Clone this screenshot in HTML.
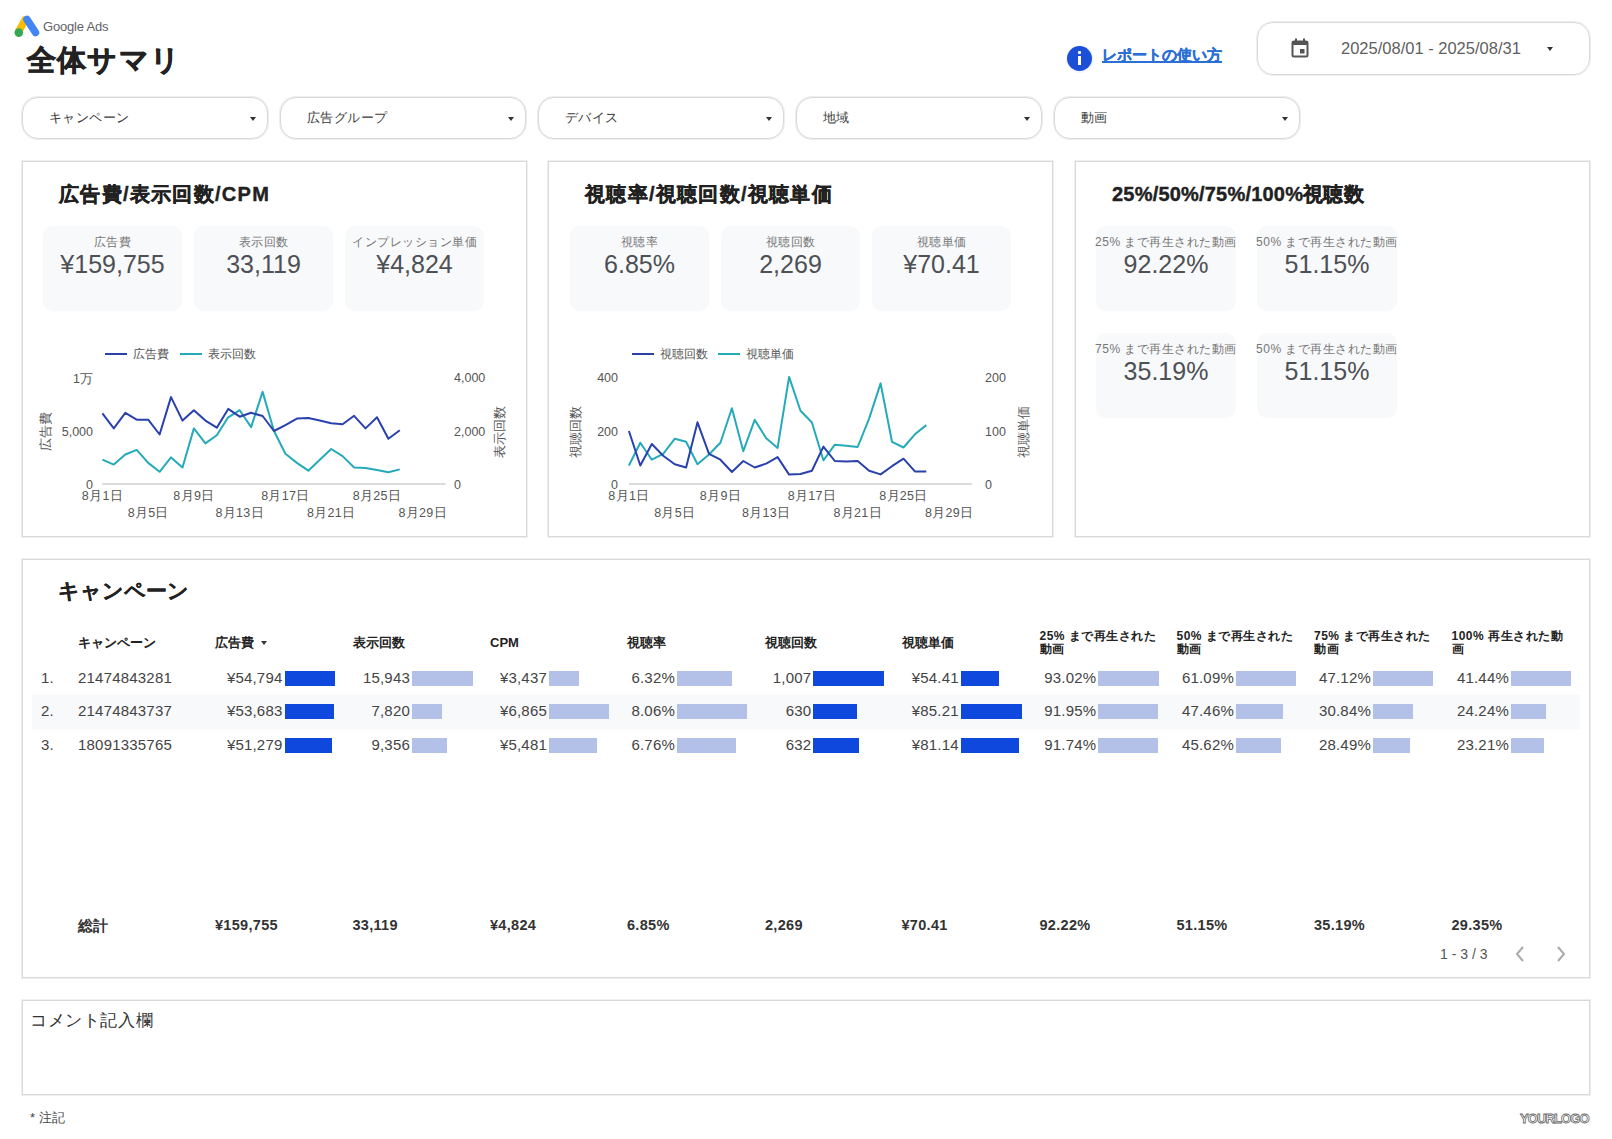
<!DOCTYPE html><html><head><meta charset="utf-8"><style>
*{box-sizing:border-box;margin:0;padding:0}
html,body{width:1612px;height:1139px;overflow:hidden;background:#fff}
body{position:relative;font-family:"Liberation Sans",sans-serif;color:#212121}
.ab{position:absolute;white-space:nowrap}
.card{position:absolute;border:1px solid #d9d9d9;box-shadow:0 0 0 1px #efefef;background:#fff}
.pill{position:absolute;border:1px solid #d9d9d9;box-shadow:0 0 0 1px #efefef;border-radius:16px;background:#fff}
.pill span{position:absolute;left:26px;top:11px;font-size:13px;letter-spacing:0.4px;color:#3c3c3c}
.caret{position:absolute;width:0;height:0;border-left:3.5px solid transparent;border-right:3.5px solid transparent;border-top:4px solid #333}
.mbox{position:absolute;background:#f8f9fb;border-radius:10px}
.mlab{position:absolute;left:-10px;right:-10px;text-align:center;font-size:12px;letter-spacing:0.5px;color:#777;top:8px;white-space:nowrap}
.mval{position:absolute;left:0;right:0;text-align:center;font-size:25px;color:#4d5054;top:23.5px;white-space:nowrap}
.ctitle{position:absolute;font-size:20px;letter-spacing:1.3px;font-weight:bold;color:#212121;-webkit-text-stroke:0.4px #212121;white-space:nowrap}
.ax{position:absolute;font-size:12.5px;color:#555;white-space:nowrap}
.th{position:absolute;font-size:13px;font-weight:bold;color:#222;white-space:nowrap;line-height:13px}
.td{position:absolute;font-size:15px;letter-spacing:0.2px;color:#444;white-space:nowrap;text-align:right}
.tot{position:absolute;font-size:14.5px;letter-spacing:0.3px;font-weight:bold;color:#333;white-space:nowrap}
</style></head><body>

<svg class="ab" style="left:0;top:0" width="45" height="42" viewBox="0 0 45 42">
<path d="M25 20 L19 31" stroke="#fbbc04" stroke-width="7.5" stroke-linecap="round" fill="none"/>
<path d="M27 19.5 L35.5 32.5" stroke="#4285f4" stroke-width="7.5" stroke-linecap="round" fill="none"/>
<circle cx="18.8" cy="32.6" r="4.3" fill="#34a853"/>
</svg>
<div class="ab" style="left:43px;top:19px;font-size:13px;color:#5f6368;letter-spacing:-0.2px">Google Ads</div>
<div class="ab" style="left:27px;top:41px;font-size:29px;letter-spacing:1.2px;font-weight:bold;color:#222;-webkit-text-stroke:0.7px #222">全体サマリ</div>
<div class="ab" style="left:1066px;top:45px;width:28px;height:28px;border-radius:50%;background:#f3f5fb"></div>
<div class="ab" style="left:1067px;top:46px;width:25px;height:25px;border-radius:50%;background:#1a4fd6"></div>
<div class="ab" style="left:1078px;top:51px;width:3px;height:3px;background:#fff;border-radius:1px"></div>
<div class="ab" style="left:1078px;top:56px;width:3px;height:9px;background:#fff"></div>
<div class="ab" style="left:1102px;top:46px;font-size:15px;font-weight:bold;color:#2a6fd6;text-decoration:underline;text-decoration-thickness:1.5px;-webkit-text-stroke:0.3px #2a6fd6">レポートの使い方</div>
<div class="ab" style="left:1257px;top:22px;width:333px;height:53px;border:1px solid #d9d9d9;box-shadow:0 0 0 1px #efefef;border-radius:16px"></div>
<svg class="ab" style="left:1291px;top:38px" width="18" height="20" viewBox="0 0 18 20">
<rect x="1.5" y="3.5" width="15" height="15" rx="1.5" fill="none" stroke="#555" stroke-width="2"/>
<rect x="1.5" y="3.5" width="15" height="3.5" fill="#555"/>
<rect x="4" y="0.5" width="2" height="4" fill="#555"/><rect x="12" y="0.5" width="2" height="4" fill="#555"/>
<rect x="9" y="11" width="4.5" height="4.5" fill="#555"/></svg>
<div class="ab" style="left:1341px;top:39px;font-size:16.5px;color:#606060">2025/08/01 - 2025/08/31</div>
<div class="caret" style="left:1547px;top:47px"></div>
<div class="pill" style="left:22px;top:97px;width:246px;height:42px"><span>キャンペーン</span><div class="caret" style="left:227px;top:19px"></div></div>
<div class="pill" style="left:280px;top:97px;width:246px;height:42px"><span>広告グループ</span><div class="caret" style="left:227px;top:19px"></div></div>
<div class="pill" style="left:538px;top:97px;width:246px;height:42px"><span>デバイス</span><div class="caret" style="left:227px;top:19px"></div></div>
<div class="pill" style="left:796px;top:97px;width:246px;height:42px"><span>地域</span><div class="caret" style="left:227px;top:19px"></div></div>
<div class="pill" style="left:1054px;top:97px;width:246px;height:42px"><span>動画</span><div class="caret" style="left:227px;top:19px"></div></div>
<div class="card" style="left:22px;top:161px;width:505px;height:376px"></div>
<div class="card" style="left:548px;top:161px;width:505px;height:376px"></div>
<div class="card" style="left:1075px;top:161px;width:515px;height:376px"></div>
<div class="ctitle" style="left:59px;top:181px">広告費/表示回数/CPM</div>
<div class="ctitle" style="left:585px;top:181px">視聴率/視聴回数/視聴単価</div>
<div class="ctitle" style="left:1112px;top:181px;letter-spacing:0.2px">25%/50%/75%/100%視聴数</div>
<div class="mbox" style="left:43px;top:226px;width:139px;height:85px"><div class="mlab">広告費</div><div class="mval">¥159,755</div></div>
<div class="mbox" style="left:194px;top:226px;width:139px;height:85px"><div class="mlab">表示回数</div><div class="mval">33,119</div></div>
<div class="mbox" style="left:345px;top:226px;width:139px;height:85px"><div class="mlab">インプレッション単価</div><div class="mval">¥4,824</div></div>
<div class="mbox" style="left:570px;top:226px;width:139px;height:85px"><div class="mlab">視聴率</div><div class="mval">6.85%</div></div>
<div class="mbox" style="left:721px;top:226px;width:139px;height:85px"><div class="mlab">視聴回数</div><div class="mval">2,269</div></div>
<div class="mbox" style="left:872px;top:226px;width:139px;height:85px"><div class="mlab">視聴単価</div><div class="mval">¥70.41</div></div>
<div class="mbox" style="left:1096px;top:226px;width:140px;height:85px"><div class="mlab">25% まで再生された動画</div><div class="mval">92.22%</div></div>
<div class="mbox" style="left:1257px;top:226px;width:140px;height:85px"><div class="mlab">50% まで再生された動画</div><div class="mval">51.15%</div></div>
<div class="mbox" style="left:1096px;top:333px;width:140px;height:85px"><div class="mlab">75% まで再生された動画</div><div class="mval">35.19%</div></div>
<div class="mbox" style="left:1257px;top:333px;width:140px;height:85px"><div class="mlab">50% まで再生された動画</div><div class="mval">51.15%</div></div>
<svg class="ab" style="left:0;top:0" width="1612" height="560"><line x1="102.4" y1="484" x2="445.6" y2="484" stroke="#d0d0d0" stroke-width="1.5"/><polyline points="102.4,459.7 113.8,464.6 125.3,454.5 136.7,449.9 148.2,462.9 159.6,471.8 171.0,457.4 182.5,467.5 193.9,428.4 205.4,443.4 216.8,435.3 228.2,417.3 239.7,410.2 251.1,427.1 262.6,391.9 274.0,431.0 285.4,453.8 296.9,462.9 308.3,470.7 319.8,459.7 331.2,449.0 342.6,456.1 354.1,467.5 365.5,467.9 377.0,470.1 388.4,472.3 399.8,469.4" fill="none" stroke="#25aab9" stroke-width="2" stroke-linejoin="round"/><polyline points="102.4,413.4 113.8,428.4 125.3,412.8 136.7,419.7 148.2,419.7 159.6,434.5 171.0,397.1 182.5,420.6 193.9,410.2 205.4,420.6 216.8,427.7 228.2,408.9 239.7,416.7 251.1,412.8 262.6,416.0 274.0,431.0 285.4,425.1 296.9,418.6 308.3,418.0 319.8,420.6 331.2,423.2 342.6,424.2 354.1,415.8 365.5,428.4 377.0,417.3 388.4,438.8 399.8,430.3" fill="none" stroke="#2a41ad" stroke-width="2" stroke-linejoin="round"/></svg>
<div class="ab" style="left:105px;top:353px;width:22px;height:2px;background:#2a41ad"></div>
<div class="ax" style="left:133px;top:346px;font-size:12px">広告費</div>
<div class="ab" style="left:180px;top:353px;width:22px;height:2px;background:#25aab9"></div>
<div class="ax" style="left:208px;top:346px;font-size:12px">表示回数</div>
<div class="ax" style="left:33px;width:60px;text-align:right;top:370.5px">1万</div>
<div class="ax" style="left:33px;width:60px;text-align:right;top:424.5px">5,000</div>
<div class="ax" style="left:33px;width:60px;text-align:right;top:477.5px">0</div>
<div class="ax" style="left:454px;top:370.5px">4,000</div>
<div class="ax" style="left:454px;top:424.5px">2,000</div>
<div class="ax" style="left:454px;top:477.5px">0</div>
<div class="ax" style="left:16px;top:423px;width:60px;text-align:center;transform:rotate(-90deg)">広告費</div>
<div class="ax" style="left:470px;top:423px;width:60px;text-align:center;transform:rotate(-90deg)">表示回数</div>
<div class="ax" style="left:62.4px;width:80px;text-align:center;top:488px;letter-spacing:0.3px">8月1日</div>
<div class="ax" style="left:108.2px;width:80px;text-align:center;top:505px;letter-spacing:0.3px">8月5日</div>
<div class="ax" style="left:153.9px;width:80px;text-align:center;top:488px;letter-spacing:0.3px">8月9日</div>
<div class="ax" style="left:199.7px;width:80px;text-align:center;top:505px;letter-spacing:0.3px">8月13日</div>
<div class="ax" style="left:245.4px;width:80px;text-align:center;top:488px;letter-spacing:0.3px">8月17日</div>
<div class="ax" style="left:291.2px;width:80px;text-align:center;top:505px;letter-spacing:0.3px">8月21日</div>
<div class="ax" style="left:337.0px;width:80px;text-align:center;top:488px;letter-spacing:0.3px">8月25日</div>
<div class="ax" style="left:382.7px;width:80px;text-align:center;top:505px;letter-spacing:0.3px">8月29日</div>
<svg class="ab" style="left:0;top:0" width="1612" height="560"><line x1="628.9" y1="484" x2="972.0999999999999" y2="484" stroke="#d0d0d0" stroke-width="1.5"/><polyline points="628.9,465.5 640.3,442.7 651.8,459.7 663.2,453.8 674.7,438.8 686.1,441.8 697.5,464.2 709.0,454.5 720.4,442.7 731.9,408.2 743.3,451.2 754.7,419.9 766.2,438.2 777.6,447.9 789.1,376.9 800.5,410.8 811.9,422.5 823.4,460.3 834.8,444.7 846.3,445.7 857.7,447.0 869.1,418.6 880.6,383.4 892.0,441.8 903.5,447.5 914.9,434.3 926.3,425.1" fill="none" stroke="#25aab9" stroke-width="2" stroke-linejoin="round"/><polyline points="628.9,431.0 640.3,465.5 651.8,444.0 663.2,455.8 674.7,464.2 686.1,467.5 697.5,422.3 709.0,453.8 720.4,459.7 731.9,472.0 743.3,461.0 754.7,467.5 766.2,463.6 777.6,457.1 789.1,474.6 800.5,474.0 811.9,470.7 823.4,446.6 834.8,461.0 846.3,461.4 857.7,461.0 869.1,470.7 880.6,474.4 892.0,466.2 903.5,458.7 914.9,471.4 926.3,471.4" fill="none" stroke="#2a41ad" stroke-width="2" stroke-linejoin="round"/></svg>
<div class="ab" style="left:632px;top:353px;width:22px;height:2px;background:#2a41ad"></div>
<div class="ax" style="left:660px;top:346px;font-size:12px">視聴回数</div>
<div class="ab" style="left:718px;top:353px;width:22px;height:2px;background:#25aab9"></div>
<div class="ax" style="left:746px;top:346px;font-size:12px">視聴単価</div>
<div class="ax" style="left:558px;width:60px;text-align:right;top:370.5px">400</div>
<div class="ax" style="left:558px;width:60px;text-align:right;top:424.5px">200</div>
<div class="ax" style="left:558px;width:60px;text-align:right;top:477.5px">0</div>
<div class="ax" style="left:985px;top:370.5px">200</div>
<div class="ax" style="left:985px;top:424.5px">100</div>
<div class="ax" style="left:985px;top:477.5px">0</div>
<div class="ax" style="left:546px;top:423px;width:60px;text-align:center;transform:rotate(-90deg)">視聴回数</div>
<div class="ax" style="left:994px;top:423px;width:60px;text-align:center;transform:rotate(-90deg)">視聴単価</div>
<div class="ax" style="left:588.9px;width:80px;text-align:center;top:488px;letter-spacing:0.3px">8月1日</div>
<div class="ax" style="left:634.7px;width:80px;text-align:center;top:505px;letter-spacing:0.3px">8月5日</div>
<div class="ax" style="left:680.4px;width:80px;text-align:center;top:488px;letter-spacing:0.3px">8月9日</div>
<div class="ax" style="left:726.2px;width:80px;text-align:center;top:505px;letter-spacing:0.3px">8月13日</div>
<div class="ax" style="left:771.9px;width:80px;text-align:center;top:488px;letter-spacing:0.3px">8月17日</div>
<div class="ax" style="left:817.7px;width:80px;text-align:center;top:505px;letter-spacing:0.3px">8月21日</div>
<div class="ax" style="left:863.5px;width:80px;text-align:center;top:488px;letter-spacing:0.3px">8月25日</div>
<div class="ax" style="left:909.2px;width:80px;text-align:center;top:505px;letter-spacing:0.3px">8月29日</div>
<div class="card" style="left:22px;top:559px;width:1568px;height:419px"></div>
<div class="ab" style="left:58px;top:577px;font-size:21px;font-weight:bold;color:#222;-webkit-text-stroke:0.15px #222">キャンペーン</div>
<div class="ab" style="left:32px;top:695px;width:1548px;height:34px;background:#f8f9fb"></div>
<div class="th" style="left:78px;top:636px">キャンペーン</div>
<div class="th" style="left:215px;top:636px">広告費</div>
<div class="th" style="left:352.5px;top:636px">表示回数</div>
<div class="th" style="left:490px;top:636px">CPM</div>
<div class="th" style="left:627px;top:636px">視聴率</div>
<div class="th" style="left:765px;top:636px">視聴回数</div>
<div class="th" style="left:901.5px;top:636px">視聴単価</div>
<div class="th" style="left:1039.5px;top:630px;font-size:12px;line-height:12.5px;letter-spacing:0.5px">25% まで再生された<br>動画</div>
<div class="th" style="left:1176.5px;top:630px;font-size:12px;line-height:12.5px;letter-spacing:0.5px">50% まで再生された<br>動画</div>
<div class="th" style="left:1314px;top:630px;font-size:12px;line-height:12.5px;letter-spacing:0.5px">75% まで再生された<br>動画</div>
<div class="th" style="left:1451.5px;top:630px;font-size:12px;line-height:12.5px;letter-spacing:0.5px">100% 再生された動<br>画</div>
<div class="caret" style="left:261px;top:641px;border-top-color:#333"></div>
<div class="td" style="left:41px;top:669px;text-align:left">1.</div>
<div class="td" style="left:78px;top:669px;text-align:left">21474843281</div>
<div class="td" style="left:182.5px;width:100px;top:669px">¥54,794</div>
<div class="ab" style="left:284.5px;top:671px;width:50.5px;height:15px;background:#0f48dc"></div>
<div class="td" style="left:310px;width:100px;top:669px">15,943</div>
<div class="ab" style="left:412px;top:671px;width:60.7px;height:15px;background:#b3c1e8"></div>
<div class="td" style="left:447px;width:100px;top:669px">¥3,437</div>
<div class="ab" style="left:549px;top:671px;width:30.2px;height:15px;background:#b3c1e8"></div>
<div class="td" style="left:575px;width:100px;top:669px">6.32%</div>
<div class="ab" style="left:677px;top:671px;width:54.9px;height:15px;background:#b3c1e8"></div>
<div class="td" style="left:711.3px;width:100px;top:669px">1,007</div>
<div class="ab" style="left:813.3px;top:671px;width:71.2px;height:15px;background:#0f48dc"></div>
<div class="td" style="left:858.8px;width:100px;top:669px">¥54.41</div>
<div class="ab" style="left:960.8px;top:671px;width:38.7px;height:15px;background:#0f48dc"></div>
<div class="td" style="left:996.3px;width:100px;top:669px">93.02%</div>
<div class="ab" style="left:1098.3px;top:671px;width:61.1px;height:15px;background:#b3c1e8"></div>
<div class="td" style="left:1134px;width:100px;top:669px">61.09%</div>
<div class="ab" style="left:1236px;top:671px;width:59.8px;height:15px;background:#b3c1e8"></div>
<div class="td" style="left:1271px;width:100px;top:669px">47.12%</div>
<div class="ab" style="left:1373px;top:671px;width:60.4px;height:15px;background:#b3c1e8"></div>
<div class="td" style="left:1409px;width:100px;top:669px">41.44%</div>
<div class="ab" style="left:1511px;top:671px;width:60.2px;height:15px;background:#b3c1e8"></div>
<div class="td" style="left:41px;top:702px;text-align:left">2.</div>
<div class="td" style="left:78px;top:702px;text-align:left">21474843737</div>
<div class="td" style="left:182.5px;width:100px;top:702px">¥53,683</div>
<div class="ab" style="left:284.5px;top:704px;width:49.5px;height:15px;background:#0f48dc"></div>
<div class="td" style="left:310px;width:100px;top:702px">7,820</div>
<div class="ab" style="left:412px;top:704px;width:29.6px;height:15px;background:#b3c1e8"></div>
<div class="td" style="left:447px;width:100px;top:702px">¥6,865</div>
<div class="ab" style="left:549px;top:704px;width:60.0px;height:15px;background:#b3c1e8"></div>
<div class="td" style="left:575px;width:100px;top:702px">8.06%</div>
<div class="ab" style="left:677px;top:704px;width:69.7px;height:15px;background:#b3c1e8"></div>
<div class="td" style="left:711.3px;width:100px;top:702px">630</div>
<div class="ab" style="left:813.3px;top:704px;width:44.2px;height:15px;background:#0f48dc"></div>
<div class="td" style="left:858.8px;width:100px;top:702px">¥85.21</div>
<div class="ab" style="left:960.8px;top:704px;width:61.0px;height:15px;background:#0f48dc"></div>
<div class="td" style="left:996.3px;width:100px;top:702px">91.95%</div>
<div class="ab" style="left:1098.3px;top:704px;width:60.1px;height:15px;background:#b3c1e8"></div>
<div class="td" style="left:1134px;width:100px;top:702px">47.46%</div>
<div class="ab" style="left:1236px;top:704px;width:47.1px;height:15px;background:#b3c1e8"></div>
<div class="td" style="left:1271px;width:100px;top:702px">30.84%</div>
<div class="ab" style="left:1373px;top:704px;width:40.0px;height:15px;background:#b3c1e8"></div>
<div class="td" style="left:1409px;width:100px;top:702px">24.24%</div>
<div class="ab" style="left:1511px;top:704px;width:35.2px;height:15px;background:#b3c1e8"></div>
<div class="td" style="left:41px;top:735.5px;text-align:left">3.</div>
<div class="td" style="left:78px;top:735.5px;text-align:left">18091335765</div>
<div class="td" style="left:182.5px;width:100px;top:735.5px">¥51,279</div>
<div class="ab" style="left:284.5px;top:737.5px;width:47.5px;height:15px;background:#0f48dc"></div>
<div class="td" style="left:310px;width:100px;top:735.5px">9,356</div>
<div class="ab" style="left:412px;top:737.5px;width:35.0px;height:15px;background:#b3c1e8"></div>
<div class="td" style="left:447px;width:100px;top:735.5px">¥5,481</div>
<div class="ab" style="left:549px;top:737.5px;width:48.2px;height:15px;background:#b3c1e8"></div>
<div class="td" style="left:575px;width:100px;top:735.5px">6.76%</div>
<div class="ab" style="left:677px;top:737.5px;width:59.2px;height:15px;background:#b3c1e8"></div>
<div class="td" style="left:711.3px;width:100px;top:735.5px">632</div>
<div class="ab" style="left:813.3px;top:737.5px;width:45.3px;height:15px;background:#0f48dc"></div>
<div class="td" style="left:858.8px;width:100px;top:735.5px">¥81.14</div>
<div class="ab" style="left:960.8px;top:737.5px;width:58.0px;height:15px;background:#0f48dc"></div>
<div class="td" style="left:996.3px;width:100px;top:735.5px">91.74%</div>
<div class="ab" style="left:1098.3px;top:737.5px;width:60.1px;height:15px;background:#b3c1e8"></div>
<div class="td" style="left:1134px;width:100px;top:735.5px">45.62%</div>
<div class="ab" style="left:1236px;top:737.5px;width:44.9px;height:15px;background:#b3c1e8"></div>
<div class="td" style="left:1271px;width:100px;top:735.5px">28.49%</div>
<div class="ab" style="left:1373px;top:737.5px;width:36.8px;height:15px;background:#b3c1e8"></div>
<div class="td" style="left:1409px;width:100px;top:735.5px">23.21%</div>
<div class="ab" style="left:1511px;top:737.5px;width:33.2px;height:15px;background:#b3c1e8"></div>
<div class="tot" style="left:78px;top:917px">総計</div>
<div class="tot" style="left:215px;top:917px">¥159,755</div>
<div class="tot" style="left:352.5px;top:917px">33,119</div>
<div class="tot" style="left:490px;top:917px">¥4,824</div>
<div class="tot" style="left:627px;top:917px">6.85%</div>
<div class="tot" style="left:765px;top:917px">2,269</div>
<div class="tot" style="left:901.5px;top:917px">¥70.41</div>
<div class="tot" style="left:1039.5px;top:917px">92.22%</div>
<div class="tot" style="left:1176.5px;top:917px">51.15%</div>
<div class="tot" style="left:1314px;top:917px">35.19%</div>
<div class="tot" style="left:1451.5px;top:917px">29.35%</div>
<div class="ab" style="left:1440px;top:946px;font-size:14px;color:#555">1 - 3 / 3</div>
<svg class="ab" style="left:1512px;top:944px" width="60" height="20" viewBox="0 0 60 20">
<path d="M11 3 L5 10 L11 17" fill="none" stroke="#aaaaaa" stroke-width="2"/>
<path d="M46 3 L52 10 L46 17" fill="none" stroke="#aaaaaa" stroke-width="2"/></svg>
<div class="card" style="left:22px;top:1000px;width:1568px;height:95px"></div>
<div class="ab" style="left:30px;top:1010px;font-size:16.5px;letter-spacing:0.6px;color:#333">コメント記入欄</div>
<div class="ab" style="left:30px;top:1109px;font-size:13px;color:#444">* 注記</div>
<div class="ab" style="left:1520px;top:1111px;font-size:13px;font-weight:bold;color:#fff;-webkit-text-stroke:0.8px #666;letter-spacing:-0.9px">YOURLOGO</div>
</body></html>
